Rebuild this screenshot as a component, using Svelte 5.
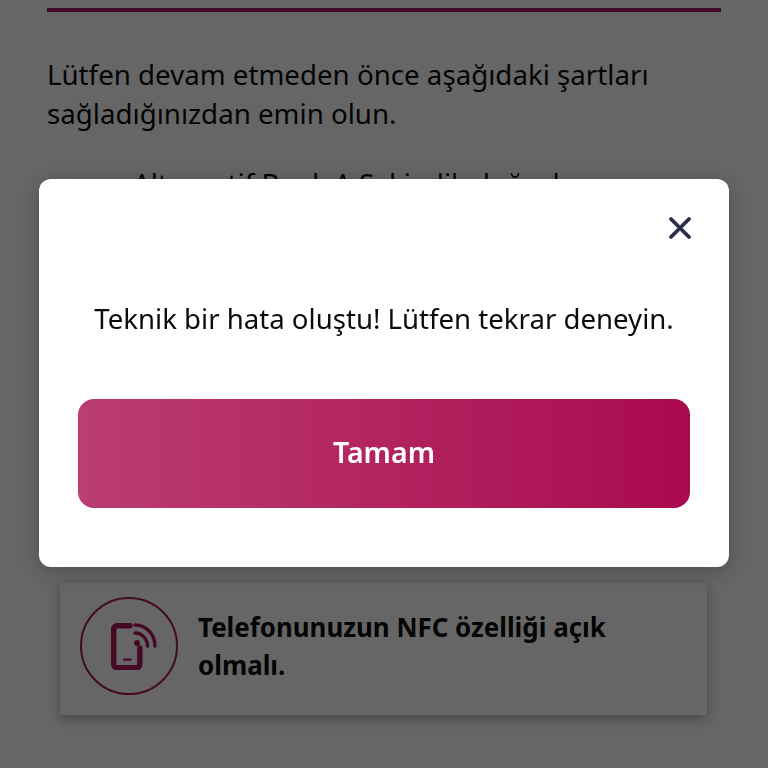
<script>
  let open = $state(true);
</script>

<main class="page">
  <div class="rule"></div>
  <p class="intro">Lütfen devam etmeden önce aşağıdaki şartları sağladığınızdan emin olun.</p>
  <p class="hidden-item">Alternatif Bank A.Ş. kimlik doğrulama</p>

  <div class="card">
    <div class="badge">
      <svg width="56" height="47" viewBox="-10 0 56 47" fill="none" stroke="#b0155c" stroke-linecap="round">
        <path d="M19 2.700H6a3.300 3.300 0 0 0-3.300 3.300v35.300a3.300 3.300 0 0 0 3.300 3.300h19.500a3.300 3.300 0 0 0 3.300-3.300V25" stroke-width="5.400" />
        <path d="M13 36.700h6.500" stroke-width="2.200" />
        <path d="M24 2c11 0 20 9 20 21" stroke-width="3.400" />
        <path d="M24 10c7 0 12.500 6 12.500 13" stroke-width="3.400" />
        <circle cx="26" cy="20" r="3" fill="#b0155c" stroke="none" />
      </svg>
    </div>
    <p class="card-text">Telefonunuzun NFC özelliği açık olmalı.</p>
  </div>
</main>

{#if open}
  <div class="scrim">
    <div class="modal">
      <div class="modal-top">
        <button class="close" aria-label="Kapat" onclick={() => (open = false)}>
          <svg width="24" height="24" viewBox="0 0 24 24" fill="none" stroke="#2b2d4a" stroke-width="3.800" stroke-linecap="round">
            <path d="M3 3l18 18M21 3L3 21" />
          </svg>
        </button>
      </div>
      <p class="message">Teknik bir hata oluştu! Lütfen tekrar deneyin.</p>
      <button class="ok" onclick={() => (open = false)}>Tamam</button>
    </div>
  </div>
{/if}

<style>
  :global(body) { background: #fff; font-family: "Noto Sans", "Open Sans", sans-serif; color: #0c0c0c; }

  .page { height: 768px; overflow: hidden; box-sizing: border-box; padding: 8px 47px 0; }
  .rule { height: 4px; background: #a8195f; }
  .intro { margin: 43px 0 0; font-size: 27.7px; line-height: 39px; }
  .hidden-item { margin: 31px 0 0 86px; font-size: 27.7px; line-height: 39px; white-space: nowrap; }

  .card { display: flex; align-items: center; gap: 20px; width: 647px; height: 132px; margin: 380px 0 0 13px; box-sizing: border-box; padding: 0 20px 6px; background: #fff; box-shadow: 0 3px 12px rgba(0, 0, 0, 0.35); }
  .badge { flex: none; display: flex; align-items: center; justify-content: center; width: 98px; height: 98px; box-sizing: border-box; border: 2px solid #a8195f; border-radius: 50%; }
  .card-text { margin: 0; font-size: 25.900px; font-weight: 700; line-height: 38px; }

  .scrim { position: fixed; inset: 0; display: flex; align-items: flex-start; justify-content: center; background: rgba(0, 0, 0, 0.6); }
  .modal { width: 690px; height: 388px; margin-top: 179px; box-sizing: border-box; padding: 37px 39px 0; background: #fff; border-radius: 12px; box-shadow: 0 4px 24px rgba(0, 0, 0, 0.25); }
  .modal-top { display: flex; justify-content: flex-end; }
  .close { display: flex; width: 24px; height: 24px; margin-right: -2px; padding: 0; border: 0; background: none; }
  .message { margin: 59px 0 0; font-size: 27.600px; line-height: 38px; text-align: center; white-space: nowrap; }
  .ok { display: block; width: 100%; height: 109px; margin-top: 62px; border: 0; border-radius: 16px; background: linear-gradient(90deg, #bb3d71, #a90a4f); color: #fff; font: 600 28.500px/1 "Noto Sans", "Open Sans", sans-serif; padding: 0 0 2px; }
</style>
